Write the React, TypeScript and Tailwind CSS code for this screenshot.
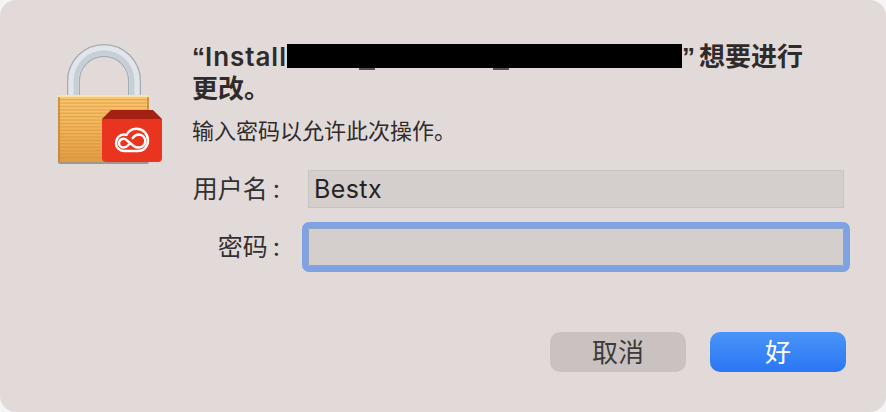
import React from 'react';

const font = { fontFamily: '"Inter", "Noto Sans CJK SC", sans-serif' };

function LockIcon() {
  const slats = [];
  for (let y = 99; y < 160; y += 3.4) slats.push(y);

  return (
    <svg viewBox="50 40 120 130" className="w-[120px] h-[130px] shrink-0">
      <defs>
        <linearGradient id="body" x1="0" x2="0" y1="0" y2="1">
          <stop offset="0" stopColor="#fbc870" />
          <stop offset="0.55" stopColor="#f2b255" />
          <stop offset="1" stopColor="#e09c42" />
        </linearGradient>
      </defs>

      {/* shackle */}
      <g fill="none">
        <path d="M73.500 96V81A30.500 30.500 0 0 1 134.500 81V96" stroke="#a3acb5" strokeWidth="13" />
        <path d="M73.500 96V81A30.500 30.500 0 0 1 134.500 81V96" stroke="#e2e6ea" strokeWidth="10.500" />
        <path d="M76 96V81A28 28 0 0 1 132 81V96" stroke="#c6ced6" strokeWidth="5" />
      </g>

      {/* body */}
      <rect x="58" y="95" width="91" height="69" rx="2" fill="#7d6a52" opacity="0.6" />
      <rect x="58" y="95" width="91" height="67" rx="2" fill="url(#body)" />
      <rect x="58" y="95" width="91" height="2" fill="#fde3ab" />
      {slats.map((y) => (
        <rect key={y} x="58" y={y} width="91" height="1.300" fill="#d08f3f" opacity="0.5" />
      ))}
      <rect x="58" y="97" width="2" height="65" fill="#b97f38" opacity="0.65" />
      <rect x="147" y="97" width="2" height="65" fill="#b97f38" opacity="0.65" />

      {/* app badge */}
      <path d="M102 119L111 110H153L162 119V120H102Z" fill="#a32113" />
      <path
        d="M102 119H162V158C162 160.500 160.500 162 158 162H106C103.500 162 102 160.500 102 158Z"
        fill="#e9351f"
      />
      <g fill="none" stroke="#ffffff" strokeWidth="2.400" strokeLinecap="round" strokeLinejoin="round">
        <path d="M126.500 135C128.500 131 132 128.800 136.500 128.800C143 128.800 148 134 148 140.500C148 146.800 143.500 151 138 151H124C119.500 151 116 147.500 116 143C116 138.500 119.500 134.500 124 134.500C124.800 134.500 125.700 134.700 126.500 135Z" />
        <path d="M119 143A4.500 4.500 0 0 1 127 140.500L134 146.200C135.500 147.200 137 147.500 139 147.500A6.500 6.500 0 0 0 145.300 141A6.500 6.500 0 0 0 139 134.500C136.200 134.500 134.200 136 132.700 138" />
        <path d="M119 143A4.500 4.500 0 0 0 123.500 147.500C126 147.500 127.500 146.200 129 144.500" />
      </g>
    </svg>
  );
}

function Field({ label, value, focused }: { label: string; value?: string; focused?: boolean }) {
  return (
    <div className="flex items-center h-[38px]">
      <label className="w-[92px] pr-1 text-right text-[25px] leading-[38px] text-[#33302f] whitespace-nowrap">
        {label}
        <span className="ml-[5px]">:</span>
      </label>
      <input
        readOnly
        defaultValue={value}
        className={
          focused
            ? 'ml-6 w-[536px] h-[38px] px-[5px] bg-[#d4cfcc] border border-[#8fa3c9] rounded-[1px] outline-[6px] outline-[#7fa3e2] text-[25px] tracking-[0.4px] text-[#262322]'
            : 'ml-6 w-[536px] h-[38px] px-[5px] bg-[#d4cfcc] border border-[#c8c4c0] text-[25px] tracking-[0.4px] text-[#262322]'
        }
      />
    </div>
  );
}

export default function App() {
  return (
    <div className="w-[886px] h-[412px] bg-[#f6f4f4] overflow-hidden" style={font}>
      <div className="w-full h-full flex pl-[50px] pr-10 pt-10 bg-[#e2dad9] rounded-[16px]">
        <LockIcon />

        <div className="ml-[22px] flex-1 pt-px">
          <h1 className="text-[26px] leading-8 font-semibold text-[#2f2b2a] whitespace-nowrap">
            <span className="font-['Liberation_Sans'] font-bold">“</span>
            <span className="tracking-[0.95px]">Install</span>
            <span className="relative inline-block align-[-2px] w-[395px] h-6 bg-black">
              <span className="absolute left-[72px] top-6 w-4 h-[2px] bg-[#57524f]" />
              <span className="absolute left-[206px] top-6 w-4 h-[2px] bg-[#57524f]" />
            </span>
            <span className="font-['Liberation_Sans'] font-bold">”</span>
            <span className="ml-[4px]">想要进行</span>
            <br />
            <span>更改。</span>
          </h1>
          <p className="mt-[11px] text-[22px] leading-[30px] text-[#2f2b2a]">输入密码以允许此次操作。</p>

          <div className="mt-6 flex flex-col gap-5">
            <Field label="用户名" value="Bestx" />
            <Field label="密码" focused />
          </div>

          <div className="mt-[66px] flex justify-end gap-6">
            <button type="button" className="w-[136px] h-10 rounded-[10px] bg-[#cac2c0] text-[26px] text-[#3d3a39]">
              取消
            </button>
            <button
              type="button"
              className="w-[136px] h-10 rounded-[10px] bg-gradient-to-b from-[#4a94f8] to-[#2a76f4] text-[26px] text-white"
            >
              好
            </button>
          </div>
        </div>
      </div>
    </div>
  );
}
